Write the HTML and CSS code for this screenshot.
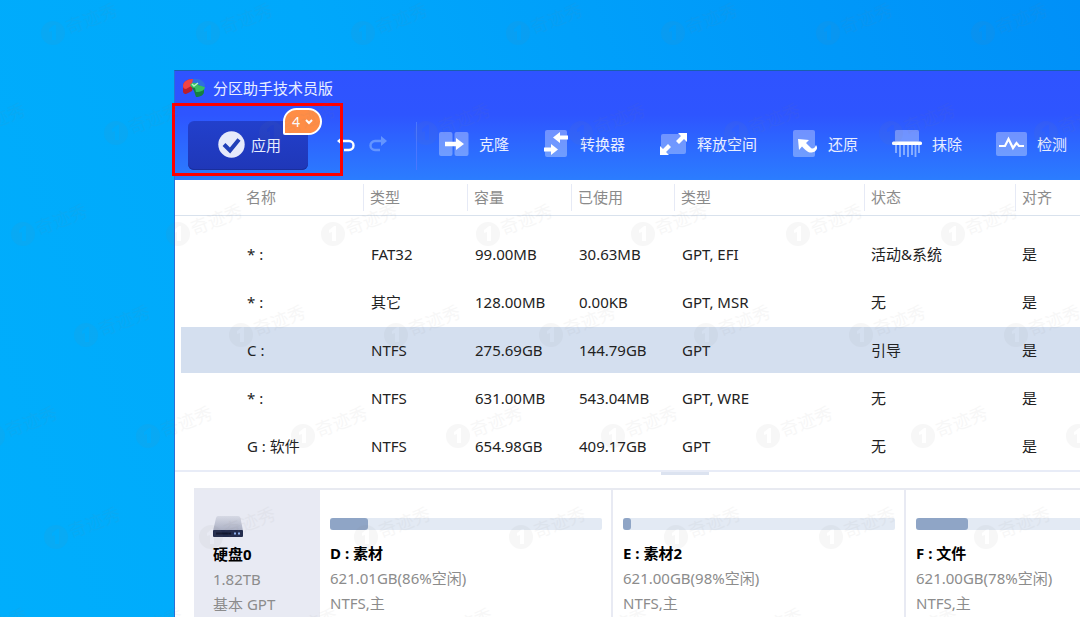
FILE: index.html
```html
<!DOCTYPE html>
<html lang="zh-CN">
<head>
<meta charset="utf-8">
<meta name="viewport" content="width=device-width, initial-scale=1">
<title>分区助手技术员版</title>
<link rel="stylesheet" href="styles.css">
</head>
<body class="desktop">
<main class="window">
  <header class="window-head">
    <div class="titlebar">
      <svg class="app-logo" width="22" height="20" viewBox="0 0 22 20" aria-hidden="true">
        <path d="M10 1C4 1 0 4 0 8v6c1 2 2 2 3 2l6-3 1-5z" fill="#b91f2e"/>
        <path d="M10 1C4 1 0 4 0 8c0 2 1 3 3 3l7-4z" fill="#f04444"/>
        <path d="M10 1c7-1 12 3 12 7l-8 1-5-3z" fill="#2f6fe0"/>
        <path d="M8 8l4-3 9 5v4c0 3-4 5-8 5l-2-6z" fill="#15803f"/>
        <path d="M7 7c2-3 6-3 8 0l7 2c0 3-4 5-9 5l-1-4c-3 0-4-1-5-3z" fill="#38bd62"/>
        <path d="M9 6l2 2 4-3" fill="none" stroke="#b5f5c4" stroke-width="1.5"/>
      </svg>
      <h1 class="window-title">分区助手技术员版</h1>
    </div>
    <div class="toolbar">
      <div class="apply">
        <button class="apply-button" type="button">
          <svg width="27" height="27" viewBox="0 0 27 27" aria-hidden="true">
            <circle cx="13.500" cy="13.500" r="13.200" fill="#e6eafb"/>
            <path d="M6 13.500l6 6L21 8.500" fill="none" stroke="#2140b8" stroke-width="4"/>
          </svg>
          <span>应用</span>
        </button>
        <button class="pending-badge" type="button" aria-label="4 个待执行操作">
          <span>4</span>
          <svg width="8" height="6" viewBox="0 0 8 6" aria-hidden="true"><path d="M1 1l3 3 3-3" fill="none" stroke="#fff" stroke-width="2"/></svg>
        </button>
      </div>
      <div class="history">
        <button class="icon-button" type="button" aria-label="撤销">
          <svg width="18" height="16" viewBox="0 0 18 16" aria-hidden="true"><path d="M5 5h7a4.500 4.500 0 0 1 0 9H7" fill="none" stroke="#fff" stroke-width="2.400"/><path d="M0 5l6-5v10z" fill="#fff"/></svg>
        </button>
        <button class="icon-button" type="button" aria-label="重做" disabled>
          <svg width="18" height="16" viewBox="0 0 18 16" aria-hidden="true"><path d="M13 5H6a4.500 4.500 0 0 0 0 9h5" fill="none" stroke="#6495ff" stroke-width="2.400"/><path d="M18 5l-6-5v10z" fill="#6495ff"/></svg>
        </button>
      </div>
      <nav class="tools" aria-label="工具">
        <button class="tool" type="button">
          <svg width="30" height="28" viewBox="0 0 30 28" aria-hidden="true"><g class="plate"><rect y="2" width="13.500" height="24" rx="2"/><rect x="15.500" y="2" width="14" height="24" rx="2"/></g><path d="M6 11.700h11V8l8 6-8 6v-3.800H6z" fill="#fff"/></svg>
          <span>克隆</span>
        </button>
        <button class="tool" type="button">
          <svg width="27" height="28" viewBox="0 0 27 28" aria-hidden="true"><rect class="plate" x="2" width="22" height="27" rx="2"/><path d="M10 7.500L17 2v3.500h8v4h-8V13zM15 19.500L8 14v3.500H1v4h7V25z" fill="#fff"/></svg>
          <span>转换器</span>
        </button>
        <button class="tool" type="button">
          <svg width="28" height="28" viewBox="0 0 28 28" aria-hidden="true"><rect class="plate" x="2" y="4" width="25" height="20" rx="2"/><path d="M28 3v9l-3-3-5 5-3-3 5-5-3-3zM1 25v-9l3 3 5-5 3 3-5 5 3 3z" fill="#fff"/></svg>
          <span>释放空间</span>
        </button>
        <button class="tool" type="button">
          <svg width="27" height="28" viewBox="0 0 27 28" aria-hidden="true"><rect class="plate" x="2" width="22" height="27" rx="2"/><path d="M7 9l11 1-3 3 5 5q3 2 5-3c3 4-1 8-5 7.500-3 0-5-2-9-6L8 20z" fill="#fff"/></svg>
          <span>还原</span>
        </button>
        <button class="tool" type="button">
          <svg width="30" height="28" viewBox="0 0 30 28" aria-hidden="true"><rect class="plate" x="3" width="24" height="12" rx="1.500"/><path d="M4 15v8M8 15v12M12 15v10M16 15v12M20 15v10M23.500 15v12M27 15v8" stroke="#8fb4ff" stroke-width="1.800"/><rect y="11.500" width="30" height="3.500" rx="1.500" fill="#fff"/></svg>
          <span>抹除</span>
        </button>
        <button class="tool" type="button">
          <svg width="31" height="28" viewBox="0 0 31 28" aria-hidden="true"><rect class="plate" y="2" width="31" height="24" rx="2"/><path d="M3 16h6l3.500-7 4.500 9 3.500-5 2.500 3h5" fill="none" stroke="#fff" stroke-width="2.200"/></svg>
          <span>检测</span>
        </button>
      </nav>
    </div>
  </header>

  <section class="partitions">
    <table class="partition-table">
      <colgroup><col class="col-name"><col class="col-size"><col class="col-size"><col class="col-used"><col class="col-kind"><col class="col-state"><col></colgroup>
      <thead>
        <tr><th>名称</th><th>类型</th><th>容量</th><th>已使用</th><th>类型</th><th>状态</th><th>对齐</th></tr>
      </thead>
      <tbody>
        <tr><td>* :</td><td>FAT32</td><td>99.00MB</td><td>30.63MB</td><td>GPT, EFI</td><td>活动&amp;系统</td><td>是</td></tr>
        <tr><td>* :</td><td>其它</td><td>128.00MB</td><td>0.00KB</td><td>GPT, MSR</td><td>无</td><td>是</td></tr>
        <tr class="selected"><td>C :</td><td>NTFS</td><td>275.69GB</td><td>144.79GB</td><td>GPT</td><td>引导</td><td>是</td></tr>
        <tr><td>* :</td><td>NTFS</td><td>631.00MB</td><td>543.04MB</td><td>GPT, WRE</td><td>无</td><td>是</td></tr>
        <tr><td>G : 软件</td><td>NTFS</td><td>654.98GB</td><td>409.17GB</td><td>GPT</td><td>无</td><td>是</td></tr>
      </tbody>
    </table>
  </section>

  <div class="splitter"><span class="splitter-grip"></span></div>

  <section class="disk">
    <div class="disk-info">
      <svg class="disk-icon" width="30" height="22" viewBox="0 0 30 22" aria-hidden="true">
        <defs><linearGradient id="lid" x1="0" y1="0" x2="0" y2="1"><stop offset="0" stop-color="#d6d9e4"/><stop offset="1" stop-color="#a9aec2"/></linearGradient></defs>
        <path d="M5 0h20q2 0 2.500 2L30 15H0L3 2q.500-2 2-2z" fill="url(#lid)"/>
        <rect y="14" width="30" height="7" rx="1" fill="#232c4d"/>
        <path d="M3 17.500h15" stroke="#10162e" stroke-width="2"/>
        <path d="M21 17.500h2M25 17.500h2" stroke="#8fb1f0" stroke-width="2"/>
      </svg>
      <h2 class="volume-name">硬盘0</h2>
      <p>1.82TB</p>
      <p>基本 GPT</p>
    </div>
    <article class="volume">
      <div class="usage"><div class="usage-fill" style="width:14%"></div></div>
      <h2 class="volume-name">D : 素材</h2>
      <p>621.01GB(86%空闲)</p>
      <p>NTFS,主</p>
    </article>
    <article class="volume">
      <div class="usage"><div class="usage-fill" style="width:3%"></div></div>
      <h2 class="volume-name">E : 素材2</h2>
      <p>621.00GB(98%空闲)</p>
      <p>NTFS,主</p>
    </article>
    <article class="volume">
      <div class="usage"><div class="usage-fill" style="width:19%"></div></div>
      <h2 class="volume-name">F : 文件</h2>
      <p>621.00GB(78%空闲)</p>
      <p>NTFS,主</p>
    </article>
  </section>
</main>

<div class="highlight"></div>

<svg class="watermark" aria-hidden="true">
  <defs>
    <g id="mark">
      <path fill-rule="evenodd" d="M-12 0a12 12 0 1 0 24 0a12 12 0 1 0-24 0zM-4-4l5-4h2v15h-4V-2l-3 1z"/>
      <text class="mark-text" transform="rotate(-21)" x="14" y="7">奇迹秀</text>
    </g>
    <g id="row">
      <use href="#mark"/><use href="#mark" x="155"/><use href="#mark" x="310"/><use href="#mark" x="465"/><use href="#mark" x="620"/><use href="#mark" x="775"/><use href="#mark" x="930"/><use href="#mark" x="1085"/>
    </g>
  </defs>
  <use href="#row" x="53" y="33"/>
  <use href="#row" x="-39" y="133"/>
  <use href="#row" x="23" y="234"/>
  <use href="#row" x="-69" y="335"/>
  <use href="#row" x="-7" y="436"/>
  <use href="#row" x="-99" y="537"/>
  <use href="#row" x="-37" y="638"/>
</svg>
</body>
</html>
```
FILE: styles.css
```css
* { box-sizing: border-box; }

.desktop {
  margin: 0;
  min-height: 100vh;
  overflow: hidden;
  background: linear-gradient(70deg, #00aefc 0%, #00a8fb 40%, #0090f8 100%);
  font: 15px/20px "Noto Sans", "Noto Sans CJK SC", sans-serif;
  color: #222;
}

h1, h2, p { margin: 0; font-size: inherit; }

button {
  border: 0;
  padding: 0;
  background: none;
  color: inherit;
  font: inherit;
}

.window {
  position: absolute;
  top: 70px;
  left: 174px;
  right: 0;
  bottom: 0;
  display: flex;
  flex-direction: column;
  overflow: hidden;
  border-top: 1px solid #175fae;
  border-left: 1px solid #2b6fd6;
  background: #fff;
}

/* Title bar and toolbar */
.window-head {
  background: linear-gradient(#2f53ff 0, #2e55ff 40%, #2b7dff 100%);
  color: #e8eeff;
}

.titlebar {
  display: flex;
  align-items: center;
  gap: 8px;
  height: 36px;
  padding: 0 8px 2px;
}

.window-title { font-weight: 400; }

.toolbar {
  display: flex;
  align-items: center;
  height: 73px;
  padding: 4px 0 0 13px;
}

.apply { position: relative; }

.apply-button {
  display: flex;
  align-items: center;
  gap: 6px;
  width: 120px;
  height: 49px;
  padding: 0 0 2px 30px;
  border-radius: 6px;
  background: linear-gradient(#2240cc, #1f37b8);
  box-shadow: inset 0 -1px #1a2f9c;
}

.pending-badge {
  position: absolute;
  top: -13px;
  left: 95px;
  display: flex;
  align-items: center;
  justify-content: center;
  gap: 5px;
  width: 39px;
  height: 27px;
  border: 2px solid #fff;
  border-radius: 14px 14px 14px 2px;
  background: #ff8d46;
  color: #fff;
  font-size: 14px;
}

.history {
  display: flex;
  gap: 14px;
  padding: 0 29px 4px;
}

.icon-button { display: flex; }

.tools {
  display: flex;
  align-items: center;
  gap: 34px;
  height: 48px;
  padding: 0 0 4px 22px;
  border-left: 1px solid #4a77ff;
}

.tool {
  display: flex;
  flex: none;
  align-items: center;
  gap: 10px;
  white-space: nowrap;
}

.plate { fill: #fff; fill-opacity: 0.32; }

/* Partition list */
.partition-table {
  width: 100%;
  table-layout: fixed;
  border-collapse: separate;
  border-spacing: 0;
}

.col-name { width: 188px; }
.col-size { width: 104px; }
.col-used { width: 103px; }
.col-kind { width: 190px; }
.col-state { width: 151px; }

.partition-table th {
  height: 36px;
  padding: 0 0 2px 7px;
  border-bottom: 1px solid #d9e2ed;
  background: linear-gradient(#e6eaf6, #e6eaf6) 0 4px / 1px 27px no-repeat;
  color: #8b8b8b;
  font-weight: 400;
  text-align: left;
}

.partition-table th:first-child {
  padding-left: 71px;
  background: none;
}

.partition-table tbody::before {
  content: "";
  display: block;
  height: 14px;
}

.partition-table td {
  height: 48px;
  padding: 0 0 0 8px;
  border-top: 1px solid transparent;
  border-bottom: 1px solid transparent;
  background-clip: padding-box;
  white-space: nowrap;
}

.partition-table td:first-child {
  padding-left: 66px;
  border-left: 6px solid transparent;
}

.partition-table td:nth-child(n+6) { padding-left: 7px; }

.selected td { background-color: #d4dfef; }

.splitter {
  height: 21px;
  padding-left: 486px;
  border-top: 2px solid #e8ecf7;
}

.splitter-grip {
  display: block;
  width: 48px;
  height: 3px;
  background: #dce3f0;
}

/* Disk map */
.disk {
  display: flex;
  flex: 1;
  margin-left: 19px;
  border-top: 2px solid #e8eaf1;
  color: #8c8c8c;
  line-height: 25px;
  white-space: nowrap;
}

.disk-info {
  flex: none;
  width: 126px;
  padding: 26px 19px 0;
  background: #e8eaf3;
}

.disk-icon { display: block; margin-bottom: 4px; }

.volume {
  flex: none;
  width: 293px;
  padding: 28px 9px 0 10px;
  border-right: 2px solid #e8eaf3;
}

.volume-name {
  color: #000;
  font-size: 15px;
  font-weight: 700;
}

.usage {
  height: 12px;
  margin-bottom: 11px;
  border-radius: 2px;
  background: #e3eaf4;
}

.usage-fill {
  height: 100%;
  border-radius: 3px;
  background: #8fa5c6;
}

/* Callout frame around the apply button */
.highlight {
  position: absolute;
  top: 103px;
  left: 172px;
  width: 171px;
  height: 73px;
  border: 3px solid #f00;
}

.watermark {
  position: absolute;
  inset: 0;
  width: 100%;
  height: 100%;
  fill: #808080;
  opacity: 0.06;
  pointer-events: none;
}

.mark-text { font-size: 18px; }
```
